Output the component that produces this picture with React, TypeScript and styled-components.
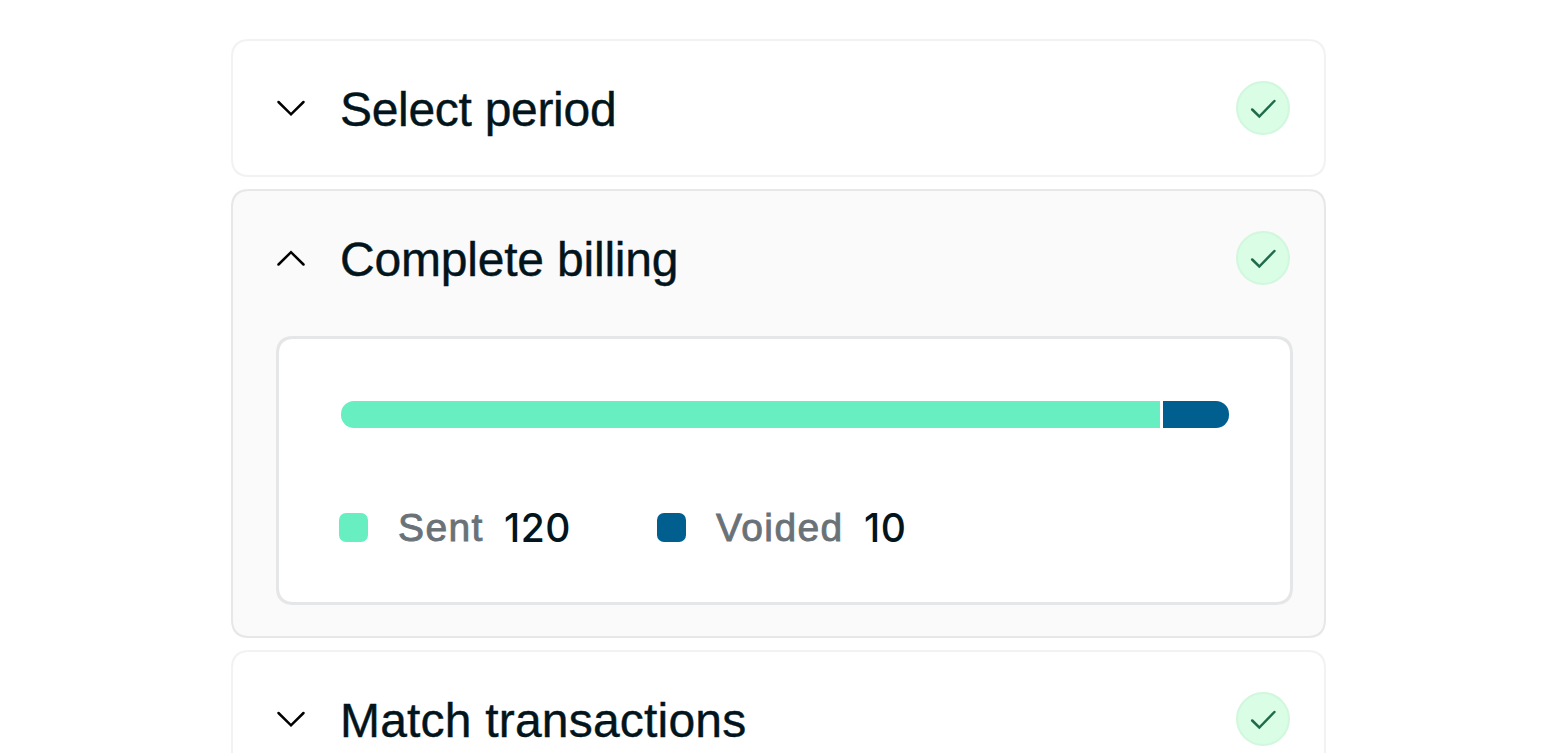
import React from "react";
import styled, { createGlobalStyle } from "styled-components";

const GlobalStyle = createGlobalStyle`
  * {
    box-sizing: border-box;
  }

  body {
    margin: 0;
    background: #fff;
    color: #03151c;
    font-family: "Liberation Sans", Arial, sans-serif;
    overflow: hidden;
  }
`;

const Page = styled.main`
  height: 753px;
  overflow: hidden;
  padding: 39px 231px 0;
`;

const Steps = styled.div`
  display: flex;
  flex-direction: column;
  gap: 12px;
  width: 1095px;
`;

const StepCard = styled.section<{ $open?: boolean }>`
  flex-shrink: 0;
  height: ${({ $open }) => ($open ? "449px" : "138px")};
  border: 2px solid ${({ $open }) => ($open ? "#e6e7e7" : "#f2f2f2")};
  border-radius: 20px;
  corner-shape: superellipse(1.4);
  background: ${({ $open }) => ($open ? "#fafafa" : "#fff")};
  padding: 0 34px 0 43px;
`;

const StepHeader = styled.header`
  display: flex;
  align-items: center;
  height: 134px;
`;

const Chevron = styled.svg`
  width: 30px;
  height: 18px;
  margin-right: 34px;
  fill: none;
  stroke: #000;
  stroke-width: 2.5;
  stroke-linecap: round;
  stroke-linejoin: miter;
`;

const StepTitle = styled.h2<{ $spacing: number }>`
  flex: 1;
  margin: 4px 0 0;
  font-size: 48px;
  font-weight: 400;
  line-height: 56px;
  letter-spacing: ${({ $spacing }) => $spacing}px;
  white-space: nowrap;
  -webkit-text-stroke: 0.4px currentColor;
`;

const DoneBadge = styled.span`
  display: flex;
  align-items: center;
  justify-content: center;
  width: 54px;
  height: 54px;
  border: 2px solid #d1f7dd;
  border-radius: 50%;
  background: #d9fde5;

  svg {
    width: 28px;
    height: 22px;
    fill: none;
    stroke: #206b4b;
    stroke-width: 2.5;
    stroke-linecap: round;
    stroke-linejoin: miter;
  }
`;

const Panel = styled.div`
  width: 1017px;
  height: 269px;
  margin-top: 11px;
  padding: 61.5px 61.5px 0;
  border: 3px solid #e5e6e7;
  border-radius: 18px;
  corner-shape: superellipse(1.3);
  background: #fff;
`;

const Bar = styled.div`
  display: flex;
  gap: 3px;
  width: 888px;
  height: 27px;
  border-radius: 13px;
  overflow: hidden;
`;

const Segment = styled.div<{ $color: string }>`
  background: ${({ $color }) => $color};
`;

const Legend = styled.div`
  display: flex;
  gap: 87px;
  margin: 80px 0 0 -1.5px;
`;

const LegendItem = styled.div`
  display: flex;
  align-items: center;
  height: 40px;
  font-size: 39px;
  line-height: 40px;
`;

const Swatch = styled.span<{ $color: string }>`
  width: 29px;
  height: 29px;
  margin-right: 30px;
  border-radius: 7px;
  background: ${({ $color }) => $color};
`;

const Label = styled.span<{ $width: number }>`
  width: ${({ $width }) => $width}px;
  color: #6a7278;
  letter-spacing: 1.4px;
  -webkit-text-stroke: 0.9px currentColor;
`;

const Value = styled.span<{ $width: number }>`
  width: ${({ $width }) => $width}px;
  font-family: Inter, sans-serif;
  font-weight: 500;
  letter-spacing: 0.5px;
`;

const stats = [
  { label: "Sent", value: 120, color: "#67efc1", share: 819.5, labelWidth: 106, valueWidth: 66 },
  { label: "Voided", value: 10, color: "#005f8f", share: 65.5, labelWidth: 148, valueWidth: 42 },
];

type StepProps = {
  title: string;
  spacing: number;
  open?: boolean;
  children?: React.ReactNode;
};

const Step = ({ title, spacing, open, children }: StepProps) => (
  <StepCard $open={open}>
    <StepHeader>
      <Chevron viewBox="0 0 30 18">
        <path d={open ? "M2.5 15.5 15 3.2l12.5 12.3" : "M2.5 3 15 15.3 27.5 3"} />
      </Chevron>
      <StepTitle $spacing={spacing}>{title}</StepTitle>
      <DoneBadge>
        <svg viewBox="0 0 28 22">
          <path d="m3.2 12.5 7.1 7L25.4 4" />
        </svg>
      </DoneBadge>
    </StepHeader>
    {children}
  </StepCard>
);

const App = () => {
  return (
    <Page>
      <GlobalStyle />
      <Steps>
        <Step title="Select period" spacing={-0.3} />
        <Step title="Complete billing" spacing={-0.2} open>
          <Panel>
            <Bar>
              {stats.map((s) => (
                <Segment key={s.label} $color={s.color} style={{ width: s.share }} />
              ))}
            </Bar>
            <Legend>
              {stats.map((s) => (
                <LegendItem key={s.label}>
                  <Swatch $color={s.color} />
                  <Label $width={s.labelWidth}>{s.label}</Label>
                  <Value $width={s.valueWidth}>{s.value}</Value>
                </LegendItem>
              ))}
            </Legend>
          </Panel>
        </Step>
        <Step title="Match transactions" spacing={0.2} />
      </Steps>
    </Page>
  );
};

export default App;
